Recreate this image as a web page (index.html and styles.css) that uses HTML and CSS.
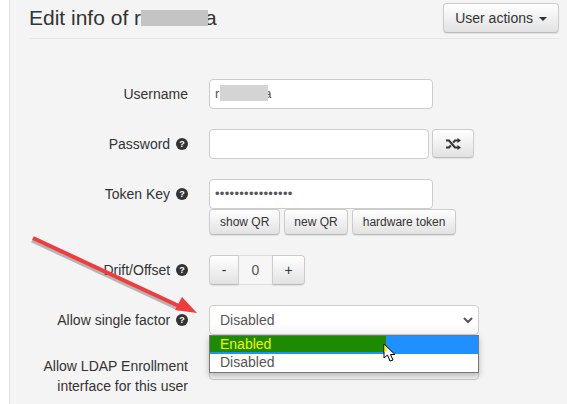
FILE: index.html
```html
<!DOCTYPE html>
<html lang="en">
<head>
    <meta charset="UTF-8">
    <title>Edit info</title>
    <link rel="stylesheet" href="styles.css">
</head>
<body>
    <div class="panel">
        <div class="page-header">
            <h3>Edit info of r<span class="redact redact-title"></span>a</h3>
            <button class="btn btn-actions">User actions <span class="caret"></span></button>
        </div>

        <div class="form">
            <!-- Username -->
            <div class="row">
                <div class="label">Username</div>
                <div class="input input-md">r<span class="redact redact-input"></span>a</div>
            </div>

            <!-- Password -->
            <div class="row">
                <div class="label">Password <span class="help">?</span></div>
                <div class="group">
                    <div class="input input-sm"></div>
                    <button class="btn btn-icon">
                        <svg width="15" height="12" viewBox="0 0 15 12"><path d="M0 2.5h3l6 7h3M0 9.500h3l1.800-2.100M7.200 4.600l1.800-2.100h3" fill="none" stroke="#333" stroke-width="2"/><path d="M11.500 0l3.500 2.500-3.500 2.500zM11.500 7l3.500 2.500-3.500 2.500z" fill="#333"/></svg>
                    </button>
                </div>
            </div>

            <!-- Token key -->
            <div class="row row-token">
                <div class="label">Token Key <span class="help">?</span></div>
                <div>
                    <div class="input input-md input-dots">••••••••••••••••</div>
                    <div class="token-btns">
                        <button class="btn btn-small">show QR</button>
                        <button class="btn btn-small">new QR</button>
                        <button class="btn btn-small">hardware token</button>
                    </div>
                </div>
            </div>

            <!-- Drift -->
            <div class="row">
                <div class="label">Drift/Offset <span class="help">?</span></div>
                <div class="stepper">
                    <button class="btn step">-</button><div class="step-val">0</div><button class="btn step">+</button>
                </div>
            </div>

            <!-- Single factor -->
            <div class="row">
                <div class="label">Allow single factor <span class="help">?</span></div>
                <div class="select">Disabled
                    <svg class="chevron" width="10" height="7" viewBox="0 0 10 7"><path d="M1 1l4 4 4-4" fill="none" stroke="#555" stroke-width="2"/></svg>
                    <div class="menu">
                        <div class="opt opt-active"><span class="opt-green">Enabled</span></div>
                        <div class="opt">Disabled</div>
                    </div>
                </div>
            </div>

            <!-- LDAP -->
            <div class="row row-ldap">
                <div class="label">Allow LDAP Enrollment<br>interface for this user</div>
                <div class="select select-under"></div>
            </div>
        </div>
    </div>

    <svg class="arrow" width="180" height="100" viewBox="0 0 180 100">
        <path d="M2 3L150 72" stroke="#777" stroke-width="4" opacity="0.5" transform="translate(-1 1.500)"/>
        <path d="M2 2L150 71" stroke="#f03c3c" stroke-width="4"/>
        <path d="M166 77L151 61L144 74Z" fill="#f03c3c"/>
    </svg>

    <svg class="cursor" width="13" height="20" viewBox="0 0 13 20">
        <path d="M1 1V15L4.500 12L7 18L10 17L7.500 11.500H12Z" fill="#fff" stroke="#000" stroke-width="1"/>
        <path d="M1.500 2V9L4 8V5Z" fill="#f4f400"/>
    </svg>
</body>
</html>
```

FILE: styles.css
```css
html, body {
    margin: 0;
    height: 100%;
    overflow: hidden;
}
body {
    background-color: #fff;
    font-family: "Liberation Sans", Arial, sans-serif;
    font-size: 14px;
    color: #333;
    position: relative;
}
.panel {
    margin-left: 9px;
    height: 404px;
    box-sizing: border-box;
    border-left: 1px solid #e3e3e3;
    background-color: #f4f4f4;
    padding: 3px 8px 0 19px;
}
.page-header {
    display: flex;
    justify-content: space-between;
    align-items: flex-start;
    height: 35px;
    border-bottom: 1px solid #e7e7e7;
}
h3 {
    margin: 3px 0 0;
    font-size: 21px;
    font-weight: normal;
    line-height: 24px;
}
.redact {
    display: inline-block;
    position: relative; /* keeps the grey box over the last letter */
    background-color: #c4c4c4;
}
.redact-title {
    width: 67px;
    height: 16px;
    margin-right: -3px;
    vertical-align: -1px;
}
.redact-input {
    width: 48px;
    height: 16px;
    background-color: #d4d4d4;
    vertical-align: -3px;
    margin-left: 1px;
    margin-right: -4px;
}
.btn {
    font-family: inherit;
    color: #333;
    border: 1px solid #ccc;
    border-bottom-color: #bbb;
    border-radius: 4px;
    background: linear-gradient(#fff, #e2e2e2);
    box-shadow: 0 1px 1px rgba(0, 0, 0, 0.08);
    padding: 0;
}
.btn-actions {
    width: 116px;
    height: 30px;
    font-size: 14px;
}
.caret {
    display: inline-block;
    border-top: 4px solid #333;
    border-left: 4px solid transparent;
    border-right: 4px solid transparent;
    vertical-align: 2px;
    margin-left: 2px;
}
.form {
    padding-top: 40px;
}
.row {
    display: grid;
    grid-template-columns: 159px 1fr;
    column-gap: 21px;
    align-items: start;
    margin-bottom: 20px;
}
.label {
    text-align: right;
    line-height: 30px;
    font-size: 14px;
}
.help {
    display: inline-block;
    width: 12px;
    height: 12px;
    border-radius: 50%;
    background-color: #333;
    color: #fff;
    font-size: 9px;
    font-weight: bold;
    line-height: 12px;
    text-align: center;
    vertical-align: 2px;
    margin-left: 2px;
}
.input {
    box-sizing: border-box;
    height: 30px;
    border: 1px solid #ccc;
    border-radius: 4px;
    background-color: #fff;
    padding: 0 5px;
    line-height: 28px;
    font-size: 13px;
    color: #555;
    white-space: nowrap;
}
.input-md {
    width: 224px;
}
.input-sm {
    width: 220px;
}
.input-dots {
    font-size: 13px;
    letter-spacing: 0.3px;
}
.group {
    display: flex;
    gap: 3px;
}
.btn-icon {
    width: 42px;
    height: 29px;
}
.btn-icon svg {
    display: block;
    margin: auto;
}
.token-btns {
    display: flex;
    gap: 4px;
}
.btn-small {
    height: 26px;
    font-size: 12px;
    padding: 0 10px;
}
.btn-small:nth-child(2) {
    padding: 0 9px;
}
.stepper {
    display: flex;
    height: 30px;
}
.step {
    width: 30px;
    font-size: 14px;
}
.step:first-child {
    border-radius: 4px 0 0 4px;
}
.step:last-child {
    width: 33px;
    border-radius: 0 4px 4px 0;
}
.step-val {
    width: 33px;
    box-sizing: border-box;
    border-top: 1px solid #ddd;
    border-bottom: 1px solid #ddd;
    text-align: center;
    line-height: 28px;
    color: #555;
    background-color: #f6f6f6;
}
.select {
    box-sizing: border-box;
    position: relative;
    width: 270px;
    height: 30px;
    border: 1px solid #ccc;
    border-radius: 4px;
    background: linear-gradient(#fff 60%, #f6f6f6);
    padding-left: 10px;
    line-height: 28px;
    color: #555;
}
.chevron {
    position: absolute;
    right: 5px;
    top: 11px;
}
.menu {
    position: absolute;
    z-index: 2;
    top: 29px;
    left: -1px;
    width: 270px;
    height: 38px;
    box-sizing: border-box;
    border: 1px solid #767676;
    background-color: #fff;
    box-shadow: 0 3px 6px rgba(0, 0, 0, 0.25);
}
.opt {
    height: 18px;
    line-height: 17px;
    padding-left: 10px;
    font-size: 14px;
    color: #555;
}
.opt-active {
    position: relative;
    background-color: #1e90ff;
}
.opt-green {
    position: absolute;
    left: 0;
    top: 0;
    width: 176px;
    height: 16px;
    padding-left: 10px;
    box-sizing: border-box;
    line-height: 16px;
    background-color: #1e8a00;
    color: #f4f400;
}
.row-ldap {
    margin-top: -1px;
}
.row-ldap .label {
    line-height: 20px;
    padding-top: 2px;
}
.select-under {
    height: 26px;
    background: #f4f4f4;
}
.arrow {
    position: absolute;
    left: 31px;
    top: 236px;
    z-index: 3;
}
.cursor {
    position: absolute;
    left: 383px;
    top: 343px;
    z-index: 4;
}
```
